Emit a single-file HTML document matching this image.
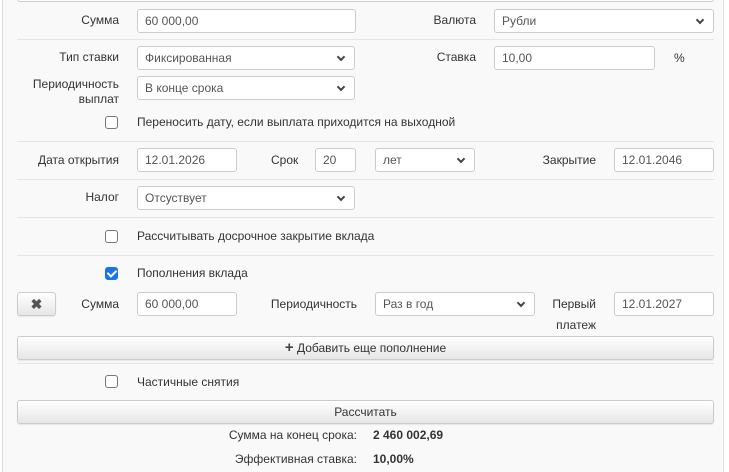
<!DOCTYPE html>
<html><head><meta charset="utf-8"><style>
*{box-sizing:border-box;margin:0;padding:0}
html,body{width:729px;height:472px;overflow:hidden}
body{background:#fff;font-family:"Liberation Sans",Arial,sans-serif;font-size:12px;color:#333;position:relative}
.panel{position:absolute;left:2px;top:-5px;width:722px;height:482px;background:#f9f9f9;border:1px solid #ddd}
.a{position:absolute}
.lbl{position:absolute;text-align:right;line-height:15px}
.inp{position:absolute;height:24px;background:#fff;border:1px solid #ccc;border-radius:3px;padding:0 7px;line-height:22px;color:#555}
.sel:after{content:"";position:absolute;right:10px;top:7px;width:4px;height:4px;border-right:2px solid #444;border-bottom:2px solid #444;transform:rotate(45deg)}
.hr{position:absolute;left:17px;width:697px;height:1px;background:#e5e5e5}
.cb{position:absolute;width:13px;height:13px;border:1px solid #777;border-radius:3px;background:#fff}
.cb.on{background:#1a73e8;border-color:#1a73e8}
.cb.on:after{content:"";position:absolute;left:3px;top:0px;width:4px;height:7px;border-right:2px solid #fff;border-bottom:2px solid #fff;transform:rotate(45deg)}
.btn{position:absolute;height:24px;border:1px solid #ccc;border-radius:3px;background:linear-gradient(#fff,#e6e6e6);text-align:center;line-height:22px;color:#333;box-shadow:0 1px 1px rgba(0,0,0,.08)}
</style></head><body>
<div class="panel"></div>
<div class="inp" style="left:17px;top:-22px;width:697px"></div>

<div class="lbl" style="left:20px;width:99px;top:13px">Сумма</div>
<div class="inp" style="left:137px;top:9px;width:219px">60 000,00</div>
<div class="lbl" style="left:380px;width:96px;top:13px">Валюта</div>
<div class="inp sel" style="left:494px;top:9px;width:220px">Рубли</div>
<div class="hr" style="top:39px"></div>

<div class="lbl" style="left:20px;width:99px;top:50px">Тип ставки</div>
<div class="inp sel" style="left:137px;top:46px;width:218px">Фиксированная</div>
<div class="lbl" style="left:380px;width:96px;top:50px">Ставка</div>
<div class="inp" style="left:494px;top:46px;width:161px">10,00</div>
<div class="a" style="left:674px;top:51px">%</div>

<div class="lbl" style="left:20px;width:99px;top:77px">Периодичность<br>выплат</div>
<div class="inp sel" style="left:137px;top:76px;width:218px">В конце срока</div>

<div class="cb" style="left:105px;top:116px"></div>
<div class="a" style="left:137px;top:115px">Переносить дату, если выплата приходится на выходной</div>
<div class="hr" style="top:141px"></div>

<div class="lbl" style="left:20px;width:99px;top:153px">Дата открытия</div>
<div class="inp" style="left:137px;top:148px;width:100px">12.01.2026</div>
<div class="a" style="left:271px;top:153px">Срок</div>
<div class="inp" style="left:315px;top:148px;width:41px">20</div>
<div class="inp sel" style="left:375px;top:148px;width:100px">лет</div>
<div class="lbl" style="left:500px;width:96px;top:153px">Закрытие</div>
<div class="inp" style="left:614px;top:148px;width:100px">12.01.2046</div>
<div class="hr" style="top:179px"></div>

<div class="lbl" style="left:20px;width:99px;top:190px">Налог</div>
<div class="inp sel" style="left:137px;top:186px;width:218px">Отсуствует</div>
<div class="hr" style="top:217px"></div>

<div class="cb" style="left:105px;top:230px"></div>
<div class="a" style="left:137px;top:229px">Рассчитывать досрочное закрытие вклада</div>
<div class="hr" style="top:255px"></div>

<div class="cb on" style="left:105px;top:267px"></div>
<div class="a" style="left:137px;top:266px">Пополнения вклада</div>

<div class="btn" style="left:17px;top:292px;width:39px;font-weight:bold;font-size:14px;color:#555">✖</div>
<div class="lbl" style="left:20px;width:99px;top:297px">Сумма</div>
<div class="inp" style="left:137px;top:292px;width:100px">60 000,00</div>
<div class="lbl" style="left:250px;width:107px;top:297px">Периодичность</div>
<div class="inp sel" style="left:375px;top:292px;width:160px">Раз в год</div>
<div class="lbl" style="left:500px;width:96px;top:294px;line-height:21px">Первый<br>платеж</div>
<div class="inp" style="left:614px;top:292px;width:100px">12.01.2027</div>

<div class="btn" style="left:17px;top:336px;width:697px"><b style="font-size:15px;color:#444">+</b> Добавить еще пополнение</div>
<div class="hr" style="top:363px"></div>

<div class="cb" style="left:105px;top:375px"></div>
<div class="a" style="left:137px;top:375px">Частичные снятия</div>

<div class="btn" style="left:17px;top:400px;width:697px">Рассчитать</div>
<div class="lbl" style="left:150px;width:207px;top:428px">Сумма на конец срока:</div>
<div class="a" style="left:373px;top:428px;font-weight:bold">2 460 002,69</div>
<div class="lbl" style="left:150px;width:207px;top:452px">Эффективная ставка:</div>
<div class="a" style="left:373px;top:452px;font-weight:bold">10,00%</div>
</body></html>
